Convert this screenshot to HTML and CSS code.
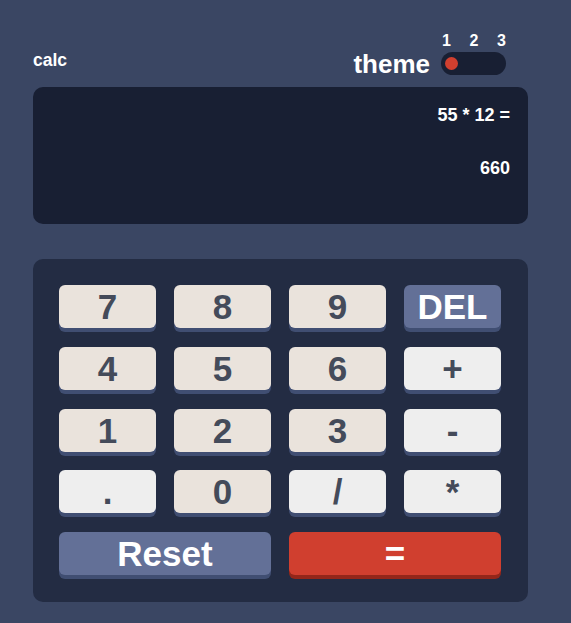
FILE: index.html
```html
<!DOCTYPE html>
<html lang="en">
<head>
<meta charset="utf-8">
<title>calc</title>
<link rel="stylesheet" href="styles.css">
</head>
<body>
<main class="calc">
  <header class="header">
    <h1 class="logo">calc</h1>
    <div class="theme">
      <span class="theme-label">theme</span>
      <div class="switch">
        <div class="switch-nums"><span>1</span><span>2</span><span>3</span></div>
        <div class="switch-track"><span class="switch-dot"></span></div>
      </div>
    </div>
  </header>
  <section class="screen">
    <div class="expr">55 * 12 =</div>
    <div class="result">660</div>
  </section>
  <section class="keypad">
    <button class="key num">7</button>
    <button class="key num">8</button>
    <button class="key num">9</button>
    <button class="key fn">DEL</button>
    <button class="key num">4</button>
    <button class="key num">5</button>
    <button class="key num">6</button>
    <button class="key op">+</button>
    <button class="key num">1</button>
    <button class="key num">2</button>
    <button class="key num">3</button>
    <button class="key op">-</button>
    <button class="key op">.</button>
    <button class="key num">0</button>
    <button class="key op">/</button>
    <button class="key op">*</button>
    <button class="key fn wide">Reset</button>
    <button class="key eq wide">=</button>
  </section>
</main>
</body>
</html>
```
FILE: styles.css
```css
* { box-sizing: border-box; }
html, body {
  margin: 0;
  padding: 0;
  background: #3a4663;
}
body {
  font-family: "Liberation Sans", Arial, sans-serif;
  font-weight: 700;
  color: #ffffff;
}
.calc {
  width: 495px;
  margin-left: 33px;
  padding-top: 32px;
}
.header {
  display: flex;
  justify-content: space-between;
  align-items: flex-end;
  padding-right: 22px;
}
.logo {
  margin: 0 0 6px 0;
  font-size: 17.5px;
  line-height: 18px;
  font-weight: 700;
}
.theme {
  display: flex;
  align-items: flex-end;
  gap: 11px;
}
.theme-label {
  font-size: 26px;
  line-height: 24px;
  margin-bottom: -1px;
}
.switch {
  width: 65px;
  display: flex;
  flex-direction: column;
}
.switch-nums {
  display: flex;
  justify-content: space-between;
  padding-left: 1px;
  font-size: 16px;
  line-height: 18px;
  margin-bottom: 2px;
}
.switch-track {
  height: 23px;
  border-radius: 12px;
  background: #181f33;
  display: flex;
  align-items: center;
  padding-left: 4px;
}
.switch-dot {
  width: 13px;
  height: 13px;
  border-radius: 50%;
  background: #d03f2f;
}
.screen {
  margin-top: 12px;
  height: 137px;
  border-radius: 10px;
  background: #181f33;
  padding: 18px 18px 0 0;
  text-align: right;
  font-size: 18px;
  line-height: 20px;
}
.result {
  margin-top: 33px;
}
.keypad {
  margin-top: 35px;
  background: #232c43;
  border-radius: 10px;
  padding: 26px 27px 27px 26px;
  display: grid;
  grid-template-columns: repeat(4, 97px);
  grid-auto-rows: 43px;
  column-gap: 18px;
  row-gap: 18.75px;
}
.key {
  border: 0;
  border-radius: 6px;
  font-family: "Liberation Sans", Arial, sans-serif;
  font-weight: 700;
  font-size: 35px;
  line-height: 43px;
  padding: 0;
  color: #444b5a;
  box-shadow: 0 4px 0 #404e72;
}
.num { background: #eae3dc; }
.op { background: #eeeeee; }
.fn { background: #637097; color: #ffffff; }
.eq { background: #d03f2f; color: #ffffff; box-shadow: 0 4px 0 #93261a; }
.wide { grid-column: span 2; }
```
